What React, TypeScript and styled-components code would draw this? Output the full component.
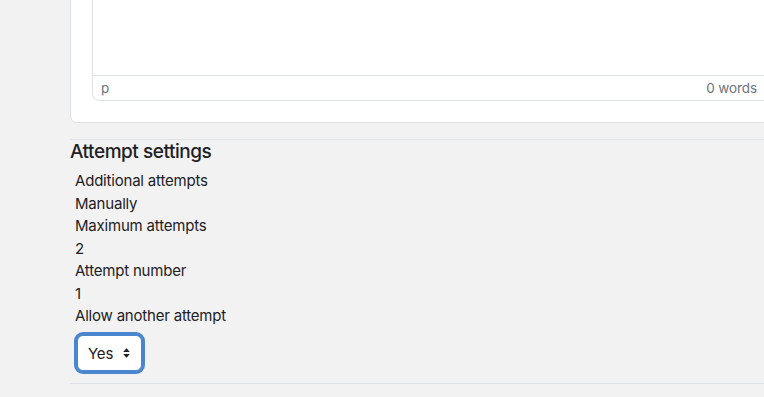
import styled, { createGlobalStyle } from 'styled-components';

const GlobalStyle = createGlobalStyle`
  html, body {
    margin: 0;
    padding: 0;
    background: #f2f2f2;
    font-family: Inter, "Noto Sans", sans-serif;
    color: #1d2125;
    overflow: hidden;
  }
`;

const Page = styled.div`
  width: 764px;
  height: 397px;
  overflow: hidden;
  padding-left: 70px;
  box-sizing: border-box;
`;

const Card = styled.div`
  margin-top: -40px;
  margin-right: -6px;
  background: #fff;
  border: 1px solid #dee2e6;
  border-radius: 7px;
  padding: 0 0 21px 21px;
`;

const Editor = styled.div`
  border: 1px solid #dee2e6;
  border-right: none;
  border-radius: 7px 0 0 7px;
`;

const EditorArea = styled.div`
  height: 113px;
  border-bottom: 1px solid #dee2e6;
`;

const StatusBar = styled.div`
  display: flex;
  justify-content: space-between;
  align-items: center;
  height: 24px;
  padding: 0 12px 0 8px;
  font-size: 13.5px;
  letter-spacing: -0.1px;
  color: #6a737b;
`;

const Section = styled.section`
  margin-top: 16px;
  border-top: 1px solid #dee2e6;
  border-bottom: 1px solid #dee2e6;
  padding: 0 0 12px;
`;

const Heading = styled.h3`
  margin: 0 0 7px;
  font-size: 19px;
  font-weight: 500;
  line-height: 23px;
  letter-spacing: -0.45px;
`;

const Fields = styled.div`
  padding-left: 5px;
  display: flex;
  flex-direction: column;
  align-items: flex-start;
`;

const Line = styled.div`
  font-size: 15px;
  line-height: 22.5px;
  letter-spacing: -0.2px;
`;

const Select = styled.div`
  margin-top: 7.5px;
  margin-left: 2px;
  width: 65px;
  height: 36px;
  display: flex;
  align-items: center;
  gap: 10px;
  padding-left: 10px;
  box-sizing: border-box;
  background: #fff;
  border: 1px solid #4a86cd;
  border-radius: 6px;
  box-shadow: 0 0 0 3px #4a86cd;
  font-size: 15px;
  letter-spacing: -0.2px;
  color: #1d2125;
`;

const Arrows = () => (
  <svg width="7" height="10" viewBox="0 0 7 10">
    <path d="M3.5 0.3 L6.8 4 H0.2 Z M3.5 9.7 L0.2 6 H6.8 Z" fill="#1d2125" />
  </svg>
);

export default function App() {
  return (
    <>
      <GlobalStyle />
      <Page>
        <Card>
          <Editor>
            <EditorArea />
            <StatusBar>
              <span>p</span>
              <span>0 words</span>
            </StatusBar>
          </Editor>
        </Card>
        <Section>
          <Heading>Attempt settings</Heading>
          <Fields>
            <Line>Additional attempts</Line>
            <Line>Manually</Line>
            <Line>Maximum attempts</Line>
            <Line>2</Line>
            <Line>Attempt number</Line>
            <Line>1</Line>
            <Line>Allow another attempt</Line>
            <Select>
              <span>Yes</span>
              <Arrows />
            </Select>
          </Fields>
        </Section>
      </Page>
    </>
  );
}
